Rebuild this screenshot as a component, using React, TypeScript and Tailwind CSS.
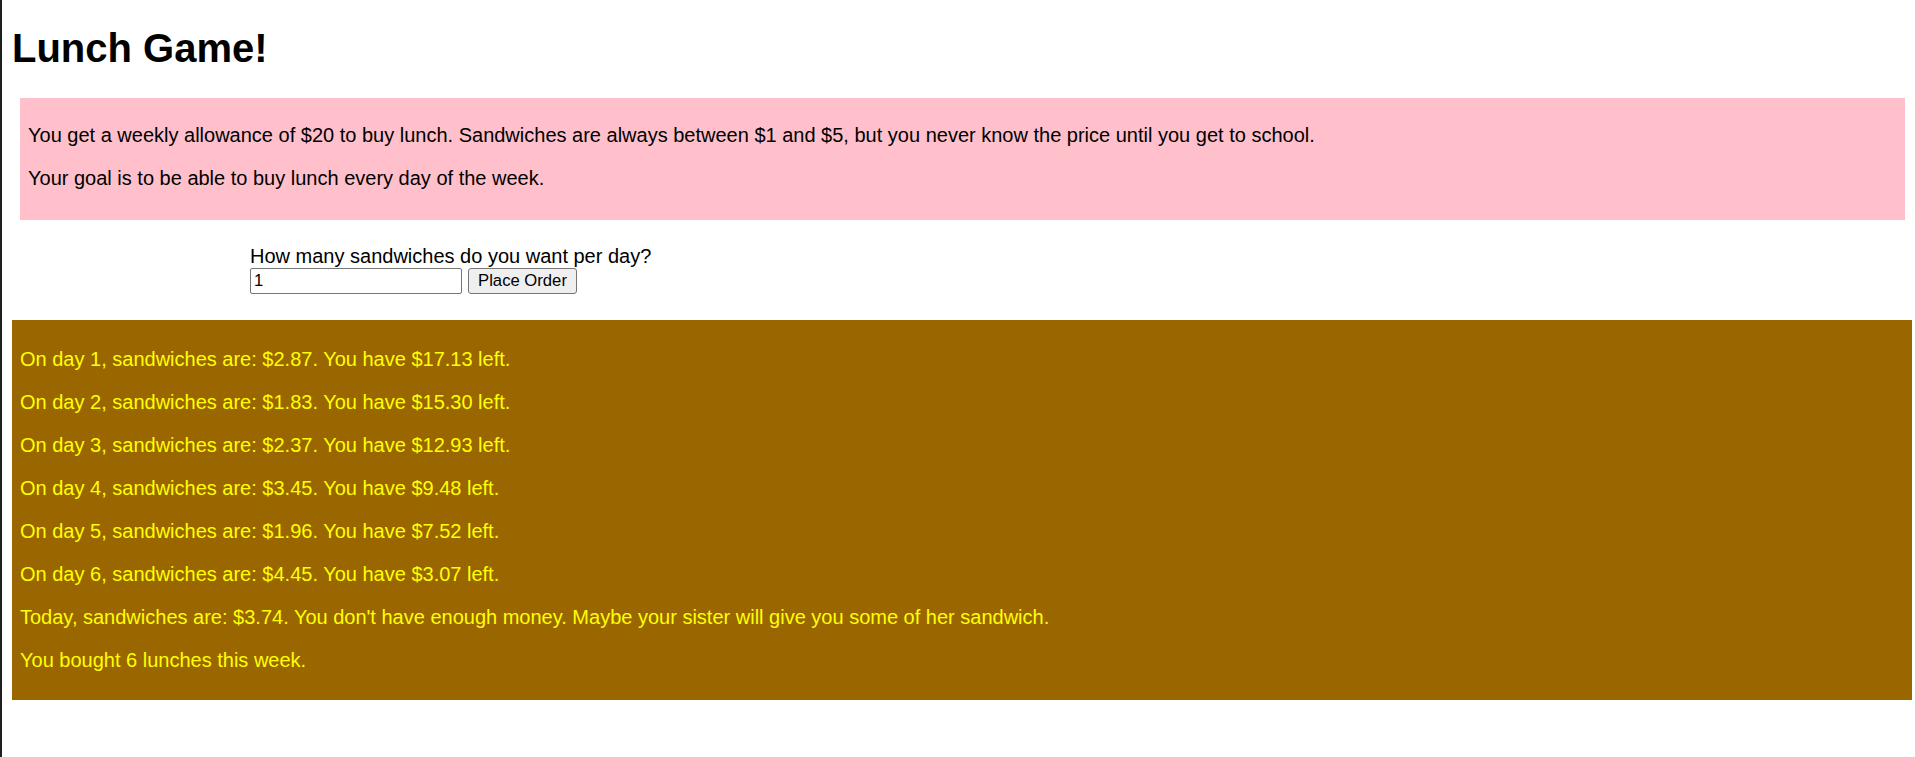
import React from "react";

const lines = [
  "On day 1, sandwiches are: $2.87. You have $17.13 left.",
  "On day 2, sandwiches are: $1.83. You have $15.30 left.",
  "On day 3, sandwiches are: $2.37. You have $12.93 left.",
  "On day 4, sandwiches are: $3.45. You have $9.48 left.",
  "On day 5, sandwiches are: $1.96. You have $7.52 left.",
  "On day 6, sandwiches are: $4.45. You have $3.07 left.",
  "Today, sandwiches are: $3.74. You don't have enough money. Maybe your sister will give you some of her sandwich.",
  "You bought 6 lunches this week.",
];

export default function App() {
  return (
    <div
      className="min-h-[757px] border-l-2 border-[#1e1e1e] bg-white pl-[10px] pr-[3px] text-black"
      style={{ fontFamily: '"Liberation Sans", Arial, sans-serif' }}
    >
      <div className="h-[25px]" />
      <h1 className="m-0 text-[40px] font-bold leading-[46px]">Lunch Game!</h1>
      <div className="h-[27px]" />
      <div className="ml-[8px] mr-[7px] bg-[#ffc0cb] px-[8px] pt-[6px] pb-[10px] text-[20px] leading-[23px]">
        <p className="my-[20px]">
          You get a weekly allowance of $20 to buy lunch. Sandwiches are always between $1 and $5, but you never know the price until you get to school.
        </p>
        <p className="my-[20px]">Your goal is to be able to buy lunch every day of the week.</p>
      </div>
      <div className="ml-[238px] mt-[25px] mb-[26px]">
        <div className="text-[20px] leading-[23px]">How many sandwiches do you want per day?</div>
        <div className="flex items-center gap-[6px]">
          <input
            type="text"
            defaultValue="1"
            className="h-[26px] w-[212px] rounded-[2px] border border-[#767676] bg-white px-[3px] text-[16.67px] text-black outline-none"
            style={{ fontFamily: '"Liberation Sans", Arial, sans-serif' }}
          />
          <button
            className="h-[26px] w-[109px] rounded-[3px] border border-[#767676] bg-[#efefef] px-[6px] text-[16.67px] leading-[20px] text-black"
            style={{ fontFamily: '"Liberation Sans", Arial, sans-serif' }}
          >
            Place Order
          </button>
        </div>
      </div>
      <div className="bg-[#996600] px-[8px] py-[8px] text-[20px] leading-[23px] text-[#ffff00]">
        {lines.map((l, i) => (
          <p key={i} className="my-[20px]">
            {l}
          </p>
        ))}
      </div>
    </div>
  );
}
